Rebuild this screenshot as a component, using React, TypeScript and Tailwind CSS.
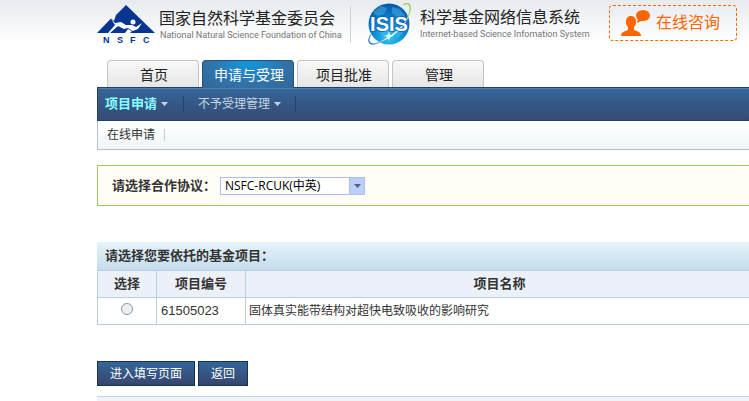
import { FC, ReactNode } from "react";

interface TabProps {
    label: string;
    active?: boolean;
}

const Tab: FC<TabProps> = ({ label, active }) => (
    <a
        href="#"
        className={
            active
                ? "relative z-10 -mb-px h-7 w-[92px] rounded-t-sm border border-b-0 border-[#24507f] bg-[radial-gradient(ellipse_at_top,#109ae0_0%,#3172a8_60%,#326799_100%)] pl-[2px] text-center text-sm leading-[29px] text-white"
                : "h-[27px] w-[92px] rounded-t-sm border border-b-0 border-[#c4c4c4] bg-linear-to-b from-[#f8f8f8] to-[#e6e6e6] pl-[2px] text-center text-sm leading-[29px] text-[#222]"
        }
    >
        {label}
    </a>
);

const Caret: FC = () => (
    <svg width="7" height="4" viewBox="0 0 7 4" className="ml-1">
        <path d="M0 0h7L3.5 4z" fill="#c5d5e4" />
    </svg>
);

const NsfcLogo: FC = () => (
    <svg width="58" height="39" viewBox="0 0 58 39" aria-label="NSFC">
        <path d="M29 0L58 28H0L14 13.500L17 16L19 10z" fill="#06368f" />
        <path
            d="M14 14L18 18L24 17L29 20L35 20L39 22L45 18L41 24L36 26L31 23L27 24L21 21L13 28H11L18 20z"
            fill="#fff"
        />
        <circle cx="36" cy="17" r="2.500" fill="#fff" />
        <path d="M31 24L35 26L33 28H28z" fill="#fff" />
        <g
            fill="#06368f"
            fontFamily="Liberation Sans, sans-serif"
            fontSize="9"
            fontWeight="bold"
        >
            <text x="6" y="38">N</text>
            <text x="20" y="38">S</text>
            <text x="33" y="38">F</text>
            <text x="46" y="38">C</text>
        </g>
    </svg>
);

const IsisLogo: FC = () => (
    <svg width="46" height="45" viewBox="0 0 46 45" aria-label="ISIS">
        <defs>
            <radialGradient id="globe" cx=".5" cy=".85" r=".85">
                <stop offset="0" stopColor="#2cc4f0" />
                <stop offset=".5" stopColor="#0a86d0" />
                <stop offset="1" stopColor="#0a55a8" />
            </radialGradient>
            <linearGradient id="orbit" x1="0" y1="1" x2="1" y2="0">
                <stop offset="0" stopColor="#0a60b0" />
                <stop offset=".3" stopColor="#fff" />
                <stop offset=".7" stopColor="#d8ecc0" />
                <stop offset="1" stopColor="#8cc63f" />
            </linearGradient>
        </defs>
        <circle cx="22" cy="23" r="20.500" fill="url(#globe)" />
        <path
            d="M7 10l7-5 6 2-3 6-6 2-4-2zM25 6l8 2 5 7-7 2-6-5zM12 31l7-2 4 5-5 5zM28 31l6-2 2 3-6 5z"
            fill="#5cc6f0"
            opacity=".4"
        />
        <path
            d="M4 33C-1 42 3 47 17 39C31 32 42 20 43 9C44 3 41 1 36 4"
            fill="none"
            stroke="url(#orbit)"
            strokeWidth="1.300"
        />
        <text
            x="22"
            y="30"
            textAnchor="middle"
            fill="#fff"
            stroke="#0a60b0"
            strokeWidth="1.500"
            paintOrder="stroke"
            fontFamily="Liberation Sans, sans-serif"
            fontSize="20"
            fontWeight="bold"
        >
            ISIS
        </text>
        <path d="M22 30l1 4 4 1-4 1-1 4-1-4-4-1 4-1z" fill="#fff" />
    </svg>
);

const ConsultIcon: FC = () => (
    <svg width="29" height="26" viewBox="0 0 29 26" fill="#f60">
        <path d="M5 12c0-4 2-6 5-6s5 2 5 6c0 3-1 4-2 5v3c1 1 7 1 7 6H0c0-5 6-5 7-6v-3c-1-1-2-2-2-5z" />
        <ellipse cx="22" cy="5.500" rx="7" ry="5.500" />
        <path d="M17 7l-1 6 6-3z" />
    </svg>
);

interface ActionButtonProps {
    children: ReactNode;
}

const ActionButton: FC<ActionButtonProps> = ({ children }) => (
    <button
        type="button"
        className="h-[25px] border border-[#16304f] bg-linear-to-b from-[#336699] to-[#36466e] px-3 text-xs text-white"
    >
        {children}
    </button>
);

const App: FC = () => (
    <div className="min-h-screen overflow-hidden bg-white bg-[linear-gradient(#e7ebef,#fff_42px)] bg-no-repeat pl-[97px] font-['Liberation_Sans','Noto_Sans_CJK_SC',sans-serif] text-xs text-[#333]">
        <header className="flex h-[60px] items-start whitespace-nowrap">
            <div className="flex w-[253px] shrink-0 gap-1 pt-[5px]">
                <NsfcLogo />
                <div className="pt-1">
                    <h1 className="text-base leading-5 text-[#222]">
                        国家自然科学基金委员会
                    </h1>
                    <p className="pl-px font-[Roboto,sans-serif] text-[9px] leading-3 text-[#777]">
                        National Natural Science Foundation of China
                    </p>
                </div>
            </div>
            <div className="mt-[6px] flex h-[37px] w-[258px] shrink-0 gap-[7px] border-l border-[#d0d3d6] pl-4">
                <div className="-mt-[5px]">
                    <IsisLogo />
                </div>
                <div className="pt-[2px]">
                    <h2 className="text-base leading-5 text-[#222]">
                        科学基金网络信息系统
                    </h2>
                    <p className="font-[Roboto,sans-serif] text-[9px] leading-3 text-[#777]">
                        Internet-based Science Infomation System
                    </p>
                </div>
            </div>
            <a
                href="#"
                className="mt-[5px] ml-px flex h-9 w-32 shrink-0 items-center gap-[6px] rounded-sm border border-dashed border-[#f60] pl-[11px] text-base text-[#f60]"
            >
                <ConsultIcon />
                在线咨询
            </a>
        </header>

        <nav>
            <div className="flex items-end gap-[3px] pl-[10px]">
                <Tab label="首页" />
                <Tab label="申请与受理" active />
                <Tab label="项目批准" />
                <Tab label="管理" />
            </div>
            <div className="flex h-[34px] items-center border border-r-0 border-[#213f68] bg-linear-to-b from-[#336699] to-[#364a73] shadow-[inset_0_1px_#4c7dae]">
                <a
                    href="#"
                    className="flex w-[85px] items-center pl-[7px] text-[13px] font-bold text-[#8ff]"
                >
                    项目申请
                    <Caret />
                </a>
                <a
                    href="#"
                    className="flex h-4 w-[113px] items-center border-x border-[#24426b] pl-[14px] text-[#c5d5e4]"
                >
                    不予受理管理
                    <Caret />
                </a>
            </div>
            <div className="flex h-[29px] items-center border-b border-l border-[#b4bfc9] bg-linear-to-b from-white to-[#eff5f9] pl-[9px]">
                <a href="#" className="border-r border-[#ccc] pr-[9px] leading-3">
                    在线申请
                </a>
            </div>
        </nav>

        <div className="mt-[15px] flex h-[41px] items-center border border-r-0 border-[#9c6] bg-[#fffdf5] pl-[14px]">
            <label
                htmlFor="agreement"
                className="w-[108px] text-[13px] font-bold"
            >
                请选择合作协议：
            </label>
            <div className="relative">
                <select
                    id="agreement"
                    className="h-[18px] w-[145px] appearance-none border border-[#a9bff0] bg-white pl-1 font-['Open_Sans','Noto_Sans_CJK_SC',sans-serif] text-xs leading-4 text-black"
                >
                    <option>NSFC-RCUK(中英)</option>
                </select>
                <span className="pointer-events-none absolute top-0 right-0 flex h-[18px] w-4 items-center justify-center border border-[#a9bff0] bg-[#bdcef8]">
                    <svg width="7" height="4" viewBox="0 0 7 4">
                        <path d="M0 0h7L3.5 4z" fill="#4d6185" />
                    </svg>
                </span>
            </div>
        </div>

        <section className="-mr-[5px] mt-9">
            <h3 className="h-7 bg-linear-to-b from-[#e6f3fa] to-[#c5dcec] pl-2 text-[13px] leading-7 font-bold">
                请选择您要依托的基金项目：
            </h3>
            <table className="w-full table-fixed border-collapse border border-[#b5cfe3]">
                <thead>
                    <tr className="h-[27px] bg-[#ecf1f9] text-[13px]">
                        <th className="w-[59px] border border-[#b5cfe3]">
                            选择
                        </th>
                        <th className="w-[89px] border border-[#b5cfe3]">
                            项目编号
                        </th>
                        <th className="border border-[#b5cfe3]">项目名称</th>
                    </tr>
                </thead>
                <tbody>
                    <tr className="h-[27px] bg-white">
                        <td className="border border-[#b5cfe3] pt-[5px] align-top">
                            <input
                                type="radio"
                                name="project"
                                aria-label="61505023"
                                className="mx-auto block size-3 appearance-none rounded-full border border-[#8299b0] bg-[#eee]"
                            />
                        </td>
                        <td className="border border-[#b5cfe3] pl-1 text-[13px]">
                            61505023
                        </td>
                        <td className="border border-[#b5cfe3] pl-[3px]">
                            固体真实能带结构对超快电致吸收的影响研究
                        </td>
                    </tr>
                </tbody>
            </table>
        </section>

        <div className="mt-9 flex gap-[3px]">
            <ActionButton>进入填写页面</ActionButton>
            <ActionButton>返回</ActionButton>
        </div>

        <footer className="mt-[10px] h-[5px] border-t border-[#bdd6e8] bg-[#eff3f6]" />
    </div>
);

export default App;
